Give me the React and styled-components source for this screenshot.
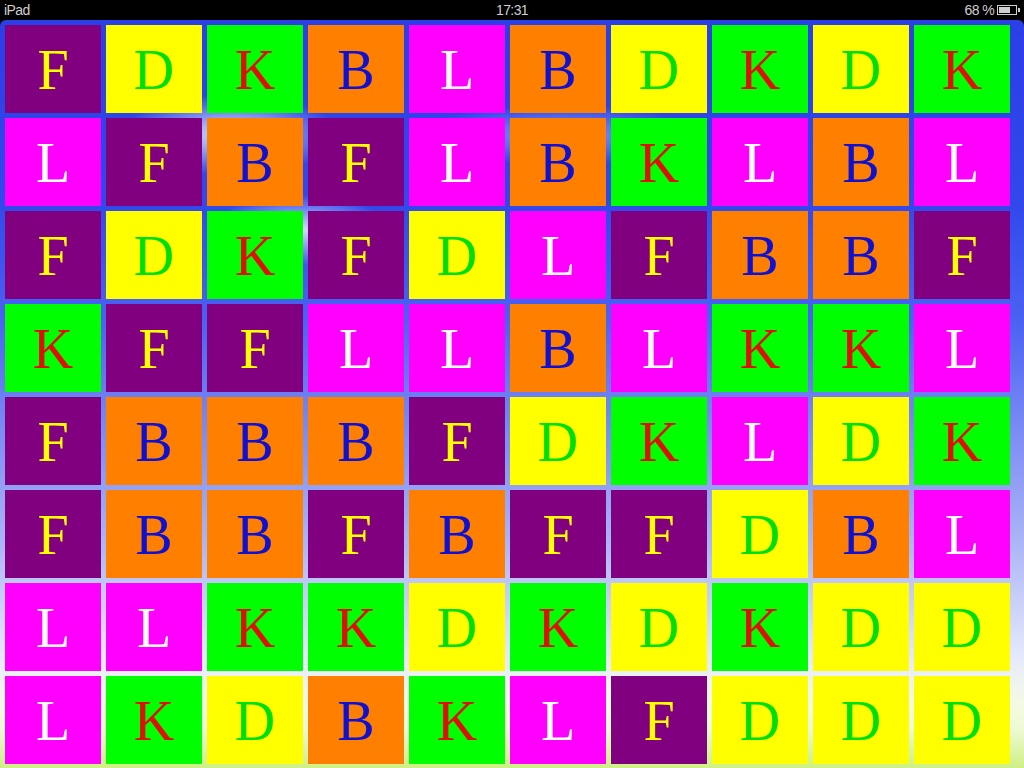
import React from 'react';
import styled, { createGlobalStyle } from 'styled-components';

const GlobalStyle = createGlobalStyle`
  html, body {
    margin: 0;
    padding: 0;
    background: #000;
  }
  * { box-sizing: border-box; }
`;

const Screen = styled.div`
  width: 1024px;
  height: 768px;
  display: flex;
  flex-direction: column;
  background: #000;
  overflow: hidden;
`;

const StatusBar = styled.div`
  height: 20px;
  flex: none;
  display: grid;
  grid-template-columns: 1fr auto 1fr;
  align-items: center;
  padding: 0 4px;
  color: #cfcfcf;
  font-family: "Liberation Sans", Arial, sans-serif;
  font-size: 14px;
  letter-spacing: -0.6px;
`;

const StatusRight = styled.div`
  display: flex;
  justify-content: flex-end;
  align-items: center;
  gap: 3px;
`;

const Battery = styled.div`
  position: relative;
  width: 20px;
  height: 10px;
  border: 1.5px solid #cfcfcf;
  margin-right: 3px;
  padding: 1px;
  &::before {
    content: '';
    display: block;
    width: 68%;
    height: 100%;
    background: #cfcfcf;
  }
  &::after {
    content: '';
    position: absolute;
    right: -4px;
    top: 2px;
    width: 2px;
    height: 4px;
    background: #cfcfcf;
  }
`;

const Board = styled.div`
  flex: 1;
  border-radius: 6px 6px 0 0;
  padding: 5px 14px 4px 5px;
  display: grid;
  grid-template-columns: repeat(10, 96px);
  grid-template-rows: repeat(8, 88px);
  column-gap: 5px;
  row-gap: 5px;
  background:
    radial-gradient(ellipse 110px 40px at 230px 115px, rgba(255,255,255,0.85), rgba(255,255,255,0) 100%),
    radial-gradient(ellipse 90px 35px at 300px 210px, rgba(255,255,255,0.8), rgba(255,255,255,0) 100%),
    radial-gradient(ellipse 140px 30px at 560px 115px, rgba(200,210,255,0.6), rgba(255,255,255,0) 100%),
    linear-gradient(to top, rgba(190,235,90,0.75) 0px, rgba(220,245,170,0.5) 40px, rgba(255,255,255,0) 110px),
    linear-gradient(to bottom,
      #2a3fe6 0px,
      #3048ec 180px,
      #4a62f2 300px,
      #7f8ff4 420px,
      #aab4f6 520px,
      #dde2fb 620px,
      #ffffff 690px,
      #ffffff 748px);
`;

const palette = {
  F: { bg: '#800080', fg: '#ffff00' },
  D: { bg: '#ffff00', fg: '#00e000' },
  K: { bg: '#00ff00', fg: '#e01000' },
  B: { bg: '#ff8000', fg: '#1010d0' },
  L: { bg: '#ff00ff', fg: '#ffffff' },
};

const Tile = styled.div`
  display: flex;
  align-items: center;
  justify-content: center;
  background: ${({ $letter }) => palette[$letter].bg};
  color: ${({ $letter }) => palette[$letter].fg};
  font-family: "Liberation Serif", "Times New Roman", serif;
  font-size: 56px;
  line-height: 1;
  padding-top: 2px;
`;

const rows = [
  'FDKBLBDKDK',
  'LFBFLBKLBL',
  'FDKFDLFBBF',
  'KFFLLBLKKL',
  'FBBBFDKLDK',
  'FBBFBFFDBL',
  'LLKKDKDKDD',
  'LKDBKLFDDD',
];

export default function App() {
  return (
    <>
      <GlobalStyle />
      <Screen>
        <StatusBar>
          <span>iPad</span>
          <span>17:31</span>
          <StatusRight>
            <span>68 %</span>
            <Battery />
          </StatusRight>
        </StatusBar>
        <Board>
          {rows.map((row, r) =>
            row.split('').map((letter, c) => (
              <Tile key={`${r}-${c}`} $letter={letter}>{letter}</Tile>
            ))
          )}
        </Board>
      </Screen>
    </>
  );
}
